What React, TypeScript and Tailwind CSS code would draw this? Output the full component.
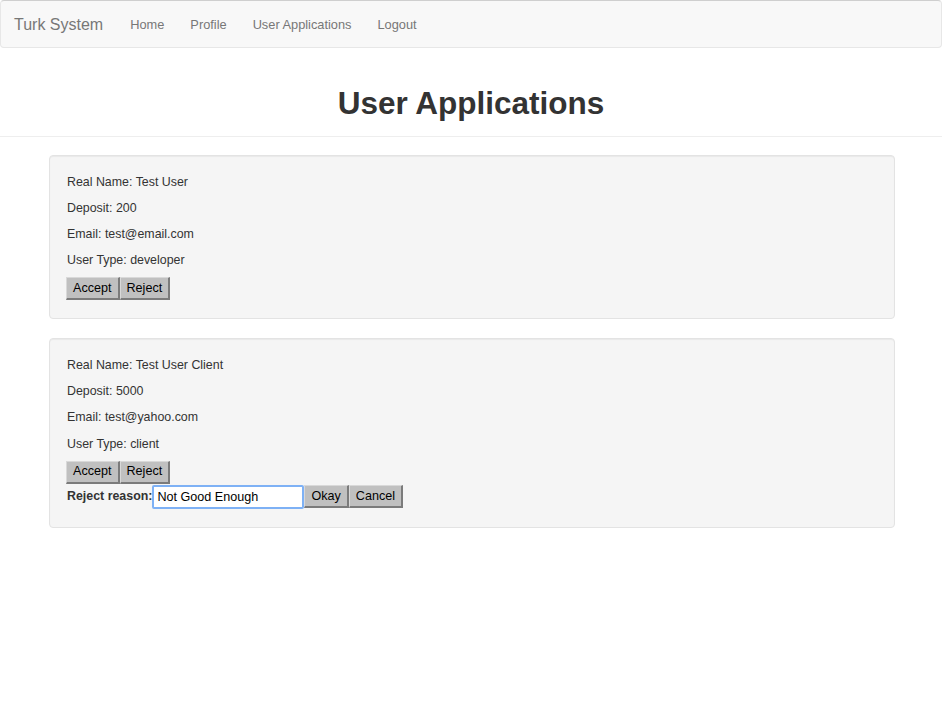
import { useState } from 'react'

type Application = {
  realName: string
  deposit: number
  email: string
  userType: string
}

const applications: Application[] = [
  { realName: 'Test User', deposit: 200, email: 'test@email.com', userType: 'developer' },
  { realName: 'Test User Client', deposit: 5000, email: 'test@yahoo.com', userType: 'client' },
]

const navLinks = ['Home', 'Profile', 'User Applications', 'Logout']

function OldButton({ children }: { children: React.ReactNode }) {
  return (
    <button
      type="button"
      className="h-[23px] px-[6px] bg-[#c0c0c0] text-black text-[12.6px] leading-none border-t border-l border-t-[#d9d9d9] border-l-[#d9d9d9] border-b-2 border-r-2 border-b-[#7b7b7b] border-r-[#7b7b7b]"
    >
      {children}
    </button>
  )
}

function ApplicationCard({ app, showReason }: { app: Application; showReason?: boolean }) {
  const [reason, setReason] = useState('Not Good Enough')

  return (
    <div className="mb-[19px] rounded-[4px] border border-[#e3e3e3] bg-[#f5f5f5] px-[16px] pt-[17.6px] pb-[18px] shadow-[inset_0_1px_1px_rgba(0,0,0,0.05)]">
      <p className="mb-[8.6px] pl-[1px] leading-[17.6px]">Real Name: {app.realName}</p>
      <p className="mb-[8.6px] pl-[1px] leading-[17.6px]">Deposit: {app.deposit}</p>
      <p className="mb-[8.6px] pl-[1px] leading-[17.6px]">Email: {app.email}</p>
      <p className="mb-[7.6px] pl-[1px] leading-[17.6px]">User Type: {app.userType}</p>
      <div className="flex">
        <OldButton>Accept</OldButton>
        <OldButton>Reject</OldButton>
      </div>
      {showReason && (
        <div className="mt-[1px] flex items-center">
          <span className="pl-[1px] font-bold">Reject reason:</span>
          <input
            value={reason}
            onChange={(e) => setReason(e.target.value)}
            className="h-[24px] w-[152px] bg-white px-[3px] text-[12.6px] text-black outline-none border-2 border-[#7eb1f5] rounded-[2px]"
          />
          <OldButton>Okay</OldButton>
          <OldButton>Cancel</OldButton>
        </div>
      )}
    </div>
  )
}

export default function App() {
  return (
    <div
      className="min-h-[716px] bg-white text-[12.4px] text-[#333]"
      style={{ fontFamily: '"Liberation Sans", Arial, sans-serif' }}
    >
      {/* navbar */}
      <nav className="flex h-[48px] items-center rounded-[4px] border border-[#e7e7e7] border-t-[#cfcfcf] bg-[#f8f8f8] pt-[2px]">
        <span className="pl-[13px] pr-[14px] text-[16px] text-[#777]">Turk System</span>
        <ul className="flex items-center">
          {navLinks.map((link) => (
            <li key={link} className="px-[13px] text-[12.8px] text-[#777]">
              {link}
            </li>
          ))}
        </ul>
      </nav>

      {/* page header */}
      <div className="border-b border-[#eee] pt-[38px] pb-[15px] text-center">
        <h1 className="text-[31.5px] font-bold leading-[35px] text-[#333]">User Applications</h1>
      </div>

      <div className="pl-[49px] pr-[47px] pt-[18px]">
        <ApplicationCard app={applications[0]} />
        <ApplicationCard app={applications[1]} showReason />
      </div>
    </div>
  )
}
